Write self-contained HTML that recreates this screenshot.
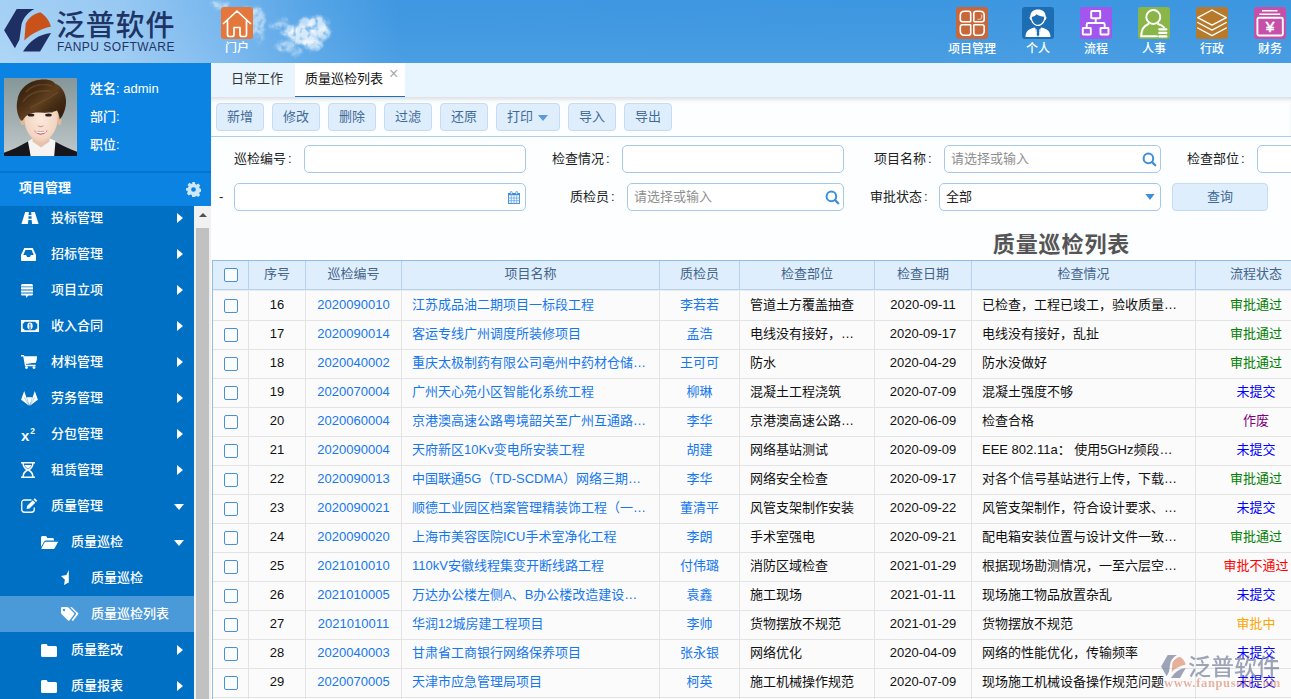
<!DOCTYPE html>
<html lang="zh-CN">
<head>
<meta charset="utf-8">
<title>质量巡检列表</title>
<style>
*{box-sizing:border-box;margin:0;padding:0}
html,body{width:1291px;height:699px;overflow:hidden;background:#fcfeff;font-family:"Liberation Sans","Noto Sans CJK SC",sans-serif;font-size:13px;color:#222}
#hdr{position:absolute;left:0;top:0;width:1291px;height:63px;background:linear-gradient(90deg,#a9d3f6 0,#9ccbf3 120px,#7ab8ee 220px,#5aa7e8 300px,#3f98e1 400px,#3d97e0 100%);overflow:hidden}
#logo-cn{position:absolute;left:56px;top:5.5px;font-size:29px;line-height:40px;font-weight:500;color:#1f3466;letter-spacing:.8px;white-space:nowrap}
#logo-en{position:absolute;left:57px;top:39.5px;font-size:12px;line-height:14px;color:#1f3466;letter-spacing:0.5px;white-space:nowrap}
.nav{position:absolute;top:7px;width:32px;height:32px;border-radius:3px}
.navt{position:absolute;top:42px;width:80px;text-align:center;font-size:12px;line-height:15px;color:#fff;white-space:nowrap;font-weight:500}
#side{position:absolute;left:0;top:63px;width:211px;height:636px;background:#0a83e3}
#side .pt{position:absolute;left:90px;font-size:13px;line-height:16px;color:#fff;white-space:nowrap;font-weight:500}
#sep{position:absolute;left:0;top:108px;width:211px;height:2px;background:#0673cc}
#mtitle{position:absolute;left:19px;top:117px;font-size:13px;line-height:16px;font-weight:bold;color:#fff}
#menu{position:absolute;left:0;top:143px;width:194px;height:493px;background:#0070c5;overflow:hidden}
.mi{position:absolute;left:0;width:194px;height:36px;color:#fff;font-size:13px;line-height:36px;white-space:nowrap;font-weight:500}
.mi.sel{background:#4a99d8}
.mi svg{position:absolute}
.mi span{position:absolute;top:-0.5px}
.arr{position:absolute;left:177px;top:13px;width:0;height:0;border-left:6px solid #fff;border-top:5px solid transparent;border-bottom:5px solid transparent}
.ard{position:absolute;left:174px;top:16px;width:0;height:0;border-top:6px solid #fff;border-left:5px solid transparent;border-right:5px solid transparent}
#sb{position:absolute;left:194px;top:143px;width:17px;height:493px;background:#f1f1f1}
#sb .th{position:absolute;left:2px;top:22px;width:13px;height:480px;background:#c1c1c1}
#sb .up{position:absolute;left:4.5px;top:6.500px;width:0;height:0;border-bottom:4.500px solid #505050;border-left:4px solid transparent;border-right:4px solid transparent}
#tabs{position:absolute;left:211px;top:63px;width:1080px;height:34px;background:#e8f4fe}
#tabs .t1{position:absolute;left:20px;top:0;font-size:13px;line-height:32px;color:#333}
#tabs .t2{position:absolute;left:84px;top:0;width:110px;height:34px;background:#fff;border-bottom:1px solid #1a6fc0;font-size:13px;line-height:32px;color:#111;padding-left:10px}
#tabs .x{position:absolute;left:178px;top:4px;font-size:16px;line-height:14px;color:#aaa}
#tbar{position:absolute;left:211px;top:97px;width:1080px;height:40px;background:#fcfeff;border-bottom:1px solid #a9cdee;box-shadow:inset 0 4px 4px -2px rgba(125,135,150,.3)}
.btn{position:absolute;top:6px;height:28px;width:48px;border:1px solid #c5dcf2;background:#dfeefc;border-radius:4px;font-size:13px;line-height:26px;text-align:center;color:#3f6a96;white-space:nowrap}
.lbl{position:absolute;font-size:13px;line-height:28px;height:28px;color:#222;white-space:nowrap}
.inp{position:absolute;height:28px;border:1px solid #a6c8ea;border-radius:5px;background:#fff;font-size:13px;line-height:26px;color:#8f8f8f;padding-left:6px;white-space:nowrap}
#title{position:absolute;left:961px;top:230px;width:200px;letter-spacing:.9px;padding-left:1px;text-align:center;font-size:22px;line-height:30px;font-weight:bold;color:#555;white-space:nowrap}
#grid{position:absolute;left:212px;top:260px;width:1104px;height:439px;border-left:1px solid #8fbde8;border-top:1px solid #8fbde8;background:#fbfbfb}
#ghead{position:absolute;left:0;top:0;width:1104px;height:29px;background:#deeefc;border-bottom:1px solid #b5d3ef}
.hc{position:absolute;top:0;height:28px;line-height:26px;text-align:center;color:#44648a;font-size:13px;border-right:1px solid #b5d3ef;white-space:nowrap}
.row{position:absolute;left:0;width:1104px;height:29px;border-bottom:1px solid #e3e3e3;background:#fbfbfb}
.c{position:absolute;top:0;height:28px;line-height:25.5px;font-size:13px;white-space:nowrap;overflow:hidden;border-right:1px solid #e3e3e3;color:#111}
.ck{position:absolute;left:12px;width:14px;height:14px;border:1px solid #4a90d6;border-radius:2px;background:#fafcfe}
.lk{color:#1577ee}
</style>
</head>
<body>
<div id="hdr">
<svg style="position:absolute;left:0;top:0" width="1291" height="63" viewBox="0 0 1291 63">
<defs>
<filter id="bl" filterUnits="userSpaceOnUse" x="190" y="-20" width="170" height="110"><feGaussianBlur stdDeviation="1.6" result="b"/><feTurbulence type="fractalNoise" baseFrequency="0.09" numOctaves="3" seed="7" result="n"/><feDisplacementMap in="b" in2="n" scale="9" xChannelSelector="R" yChannelSelector="G" result="d"/><feGaussianBlur in="d" stdDeviation="0.7" result="e"/><feTurbulence type="fractalNoise" baseFrequency="0.16" numOctaves="2" seed="3" result="n2"/><feColorMatrix in="n2" type="matrix" values="0 0 0 0 1  0 0 0 0 1  0 0 0 0 1  2.7 0 0 0 -0.3" result="m"/><feComposite in="e" in2="m" operator="in"/></filter>
<linearGradient id="sky" x1="0" y1="0" x2="0" y2="1"><stop offset="0" stop-color="#2a86dc" stop-opacity=".04"/><stop offset="1" stop-color="#fff" stop-opacity=".06"/></linearGradient>
</defs>
<rect width="1291" height="63" fill="url(#sky)"/>
<g filter="url(#bl)" fill="#fff">
<ellipse cx="257" cy="21" rx="8" ry="13" opacity=".5"/>
<ellipse cx="250" cy="10" rx="7" ry="4" opacity=".4"/>
<ellipse cx="220" cy="5" rx="8" ry="3" opacity=".5"/>
<ellipse cx="259" cy="38" rx="4" ry="5" opacity=".3"/>
<ellipse cx="318" cy="25" rx="11" ry="9" opacity=".7"/>
<ellipse cx="306" cy="22" rx="7" ry="6" opacity=".6"/>
<ellipse cx="303" cy="35" rx="15" ry="10" opacity=".75"/>
<ellipse cx="290" cy="30" rx="9" ry="6" opacity=".6"/>
<ellipse cx="277" cy="25" rx="6" ry="2.500" opacity=".5"/>
<ellipse cx="284" cy="20" rx="3" ry="2" opacity=".4"/>
<ellipse cx="285" cy="46" rx="9" ry="4" opacity=".5"/>
<ellipse cx="313" cy="44" rx="10" ry="6" opacity=".65"/>
<ellipse cx="325" cy="33" rx="5" ry="8" opacity=".6"/>
<ellipse cx="296" cy="52" rx="5" ry="3" opacity=".4"/>
</g>
<path d="M4.1 30.2L16.7 9H34.3C26.1 13.5 21.6 20.7 21.2 27L19.4 39.7L14.9 48.2Z" fill="#1e2f63"/>
<path d="M40.1 12.2C45.500 15.500 49 20 51 26.600C38 30 30 35 24.300 40.600L25.700 23.400C30 16 34 14 40.100 12.200Z" fill="#c9521b"/>
<path d="M51 32.9L40.1 51.4H23C29.8 40.6 38.8 34.3 51 32.9Z" fill="#1e2f63"/>
</svg>
<div id="logo-cn">泛普软件</div>
<div id="logo-en">FANPU SOFTWARE</div>
<div class="nav" style="left:221px;background:#e4783c"><svg width="32" height="32" viewBox="0 0 32 32"><path d="M2.500 16.500L16 4L29.500 16.500M6.500 13.500V27.500Q6.500 29.500 8.500 29.500H11Q13 29.500 13 27.500V20.500H19V27.500Q19 29.500 21 29.500H23.500Q25.500 29.500 25.500 27.500V13.500" fill="none" stroke="#fff" stroke-width="1.700" stroke-linejoin="round" stroke-linecap="round"/></svg></div>
<div class="navt" style="left:197px;top:40.5px">门户</div>
<div class="nav" style="left:956px;background:#c8683a"><svg width="32" height="32" viewBox="0 0 32 32"><g fill="none" stroke="#fff" stroke-width="1.600" stroke-linejoin="round"><path d="M8.50 4.30H12.50Q14.70 4.30 14.70 6.50V14.10Q14.70 14.70 14.10 14.70H6.50Q4.30 14.70 4.30 12.50V8.50Q4.30 4.30 8.50 4.30Z"/><path d="M20.00 4.30H24.00Q28.20 4.30 28.20 8.50V12.50Q28.20 14.70 26.00 14.70H18.40Q17.80 14.70 17.80 14.10V6.50Q17.80 4.30 20.00 4.30Z"/><path d="M6.50 17.80H14.10Q14.70 17.80 14.70 18.40V26.00Q14.70 28.20 12.50 28.20H8.50Q4.30 28.20 4.30 24.00V20.00Q4.30 17.80 6.50 17.80Z"/><path d="M18.40 17.80H26.00Q28.20 17.80 28.20 20.00V24.00Q28.20 28.20 24.00 28.20H20.00Q17.80 28.20 17.80 26.00V18.40Q17.80 17.80 18.40 17.80Z"/></g><path d="M21.500 12.300H23.500Q25.800 12.300 25.800 10V7.500" fill="none" stroke="#fff" stroke-width=".9" opacity=".75"/></svg></div>
<div class="navt" style="left:932px">项目管理</div>
<div class="nav" style="left:1022px;background:#1d6db3"><svg width="32" height="32" viewBox="0 0 32 32"><path d="M16 2.500C11.500 2.500 8.300 5 8.300 9.500C7.600 9.500 7.400 10.500 7.700 11.500C8 12.600 8.600 13 9 13C10 16.500 12.800 19 16 19C19.200 19 22 16.500 23 13C23.400 13 24 12.600 24.300 11.500C24.600 10.500 24.400 9.500 23.700 9.500C23.700 5 20.500 2.500 16 2.500Z" fill="#fff"/><path d="M9.800 10C12 9.800 13.500 8.500 14.500 7.300C16.500 8.800 19.500 9.800 22.200 9.800C22.200 14 19.500 17.800 16 17.800C12.500 17.800 9.800 14 9.800 10Z" fill="#1d6db3"/><path d="M3.500 30C3.500 24 7 21.800 12.800 20.500L16 24L19.200 20.500C25 21.800 28.500 24 28.500 30Z" fill="#fff"/><path d="M15.200 22.500H16.800L17.300 27.500L16 30L14.700 27.500Z" fill="#1d6db3"/><path d="M12.800 20.500L16 24L14 25.500ZM19.200 20.500L16 24L18 25.500Z" fill="#1d6db3" opacity=".35"/></svg></div>
<div class="navt" style="left:998px">个人</div>
<div class="nav" style="left:1080px;background:#a256ee"><svg width="32" height="32" viewBox="0 0 32 32"><g fill="none" stroke="#fff" stroke-width="1.900" stroke-linejoin="round"><rect x="11.200" y="4" width="9" height="7.200" rx=".5"/><path d="M15.700 11.200V16M6.700 21V17.500Q6.700 16 8.200 16H23.200Q24.700 16 24.700 17.500V21"/><rect x="2.800" y="21" width="8" height="6.500" rx=".5"/><rect x="20.500" y="21" width="8" height="6.500" rx=".5"/></g></svg></div>
<div class="navt" style="left:1056px">流程</div>
<div class="nav" style="left:1138px;background:#8ab548"><svg width="32" height="32" viewBox="0 0 32 32"><g fill="none" stroke="#fff" stroke-width="1.900" stroke-linecap="round"><circle cx="15.300" cy="10" r="7"/><path d="M19 29.300H3.200C3.200 22.500 6.500 18.500 10.500 17M20 17C22.500 17.800 24.500 18.800 26 20.300"/></g><g stroke="#fff" stroke-width="2.300" stroke-linecap="round"><path d="M21.300 22.300H28.300M21.300 25.900H28.300M21.300 29.400H28.300"/></g></svg></div>
<div class="navt" style="left:1114px">人事</div>
<div class="nav" style="left:1196px;background:#b77a2c"><svg width="32" height="32" viewBox="0 0 32 32"><g fill="none" stroke="#fff" stroke-width="1.400" stroke-linejoin="round" stroke-linecap="round"><path d="M16 3L30.300 10.600L16 18.200L1.700 10.600Z"/><path d="M1.700 15.500L16 23.100L30.300 15.500"/><path d="M1.700 21L16 28.600L30.300 21"/></g></svg></div>
<div class="navt" style="left:1172px">行政</div>
<div class="nav" style="left:1254px;background:#c64fa9"><svg width="32" height="32" viewBox="0 0 32 32"><g fill="none" stroke="#fff" stroke-width="1.500"><path d="M8 3.700H23.500M5.300 7.200H26.200"/><rect x="3.400" y="10.700" width="25.400" height="17.800" rx="1.500" stroke-width="1.900"/></g><text x="16" y="24.600" font-family="Liberation Sans, sans-serif" font-size="15.500" fill="#fff" stroke="#fff" stroke-width=".5" text-anchor="middle">¥</text></svg></div>
<div class="navt" style="left:1230px">财务</div>
</div>
<div id="side">
<svg style="position:absolute;left:4px;top:15px" width="73" height="78" viewBox="0 0 73 78">
<defs>
<linearGradient id="abg" x1="0" y1="0" x2="0" y2="1"><stop offset="0" stop-color="#85979a"/><stop offset=".55" stop-color="#a3b0b2"/><stop offset="1" stop-color="#c0c9ca"/></linearGradient>
<linearGradient id="ahr" x1="0" y1="0" x2="1" y2=".9"><stop offset="0" stop-color="#2e1c0d"/><stop offset=".35" stop-color="#472d14"/><stop offset=".55" stop-color="#5f3f20"/><stop offset=".75" stop-color="#422a13"/><stop offset="1" stop-color="#2f1d0d"/></linearGradient>
<radialGradient id="afc" cx=".5" cy=".45" r=".6"><stop offset="0" stop-color="#fae9dd"/><stop offset=".7" stop-color="#f3d6c3"/><stop offset="1" stop-color="#e2b79c"/></radialGradient>
<filter id="ab" x="-10%" y="-10%" width="120%" height="120%"><feGaussianBlur stdDeviation=".55"/></filter>
<clipPath id="acl"><rect width="73" height="78"/></clipPath>
</defs>
<g clip-path="url(#acl)">
<rect width="73" height="78" fill="url(#abg)"/>
<g filter="url(#ab)">
<path d="M-2 80V75.500C8 72 16 68 24 63.500L36.500 72L50 63C58 67.500 66 71.500 75 74.500V80Z" fill="#15151b"/>
<path d="M24 63.500L29 60H45L51.500 63L50 80H27Z" fill="#f6f4f2"/>
<path d="M28.500 52H45.500V63.500L37 69.500L28.500 63.500Z" fill="#e6c2aa"/>
<path d="M19.500 34C19.500 50 24 60 36.700 66C49 60 54.600 50 54.600 34C54 26 46 22 36.700 22C27 22 20 26 19.500 34Z" fill="url(#afc)"/>
<ellipse cx="18.500" cy="43" rx="2" ry="4" fill="#e3b89d"/>
<ellipse cx="55.500" cy="43" rx="2" ry="4" fill="#e3b89d"/>
<path d="M17 42.500C12 36 12.300 26 13.500 22C15 10 26 1.500 40 1.500C47 1.500 50 4 51 5.500C58 8 62.500 16 62 25C61.500 32 59 38 55.700 41.500C55.500 38 54.500 35 53 32.500C47 35.500 39 34.500 31 34.500C26 35 22 37 20 40.500C19.500 42 18 43 17 42.500Z" fill="url(#ahr)"/>
<path d="M22 14C28 7 38 5 48 8M19 24C24 16 34 12 46 13M26 30C34 25 44 22 54 14" stroke="#7d5830" stroke-width="1.400" fill="none" opacity=".5"/>
<ellipse cx="27" cy="37" rx="3.300" ry="1.500" fill="#2a1e1c"/><ellipse cx="44.500" cy="37" rx="3.300" ry="1.500" fill="#2a1e1c"/>
<path d="M23 34.500C25.500 33.300 28.500 33.300 31 34.300M40.500 34.300C43 33.300 46 33.300 48.500 34.500" stroke="#5a4028" stroke-width=".9" fill="none" opacity=".7"/>
<path d="M34 47.500C35.200 49 38.200 49 39.400 47.500" stroke="#d49c82" stroke-width="1.100" fill="none"/>
<path d="M30 52.500C32.500 58 41 58 43.500 52.500C39.500 53.800 34 53.800 30 52.500Z" fill="#cf636e"/>
<path d="M31.500 53.600C35 55 38.500 55 42 53.600" stroke="#fff" stroke-width="1.500" fill="none"/>
</g>
</g>
</svg>
<div class="pt" style="top:18px">姓名: admin</div>
<div class="pt" style="top:46px">部门:</div>
<div class="pt" style="top:74px">职位:</div>
<div id="sep"></div>
<div id="mtitle">项目管理</div>
<svg style="position:absolute;left:185.500px;top:118.500px" width="15" height="15" viewBox="0 0 16 16"><path fill="#cfe6fb" fill-rule="evenodd" d="M6.6 0h2.8l.4 2.1c.5.2 1 .4 1.400.7l1.900-1.100 2 2-1.100 1.900c.3.400.5.900.7 1.400l2.100.4v2.800l-2.100.4c-.2.500-.4 1-.7 1.400l1.100 1.900-2 2-1.900-1.100c-.4.300-.9.500-1.400.7L9.400 16H6.600l-.4-2.100c-.5-.2-1-.4-1.400-.7l-1.900 1.100-2-2 1.100-1.900c-.3-.4-.5-.9-.7-1.400L0 9.400V6.600l2.100-.4c.2-.5.400-1 .7-1.400L1.700 2.900l2-2 1.900 1.100c.4-.3.900-.5 1.400-.7zM8 5.500a2.500 2.500 0 100 5 2.500 2.500 0 000-5z"/></svg>
<div id="menu">
<div class="mi" style="top:-6px"><svg width="18" height="12" viewBox="0 0 18 12" style="left:21px;top:12px"><path fill="#fff" d="M4.200 0H7.800L7.600 3H10.400L10.200 0H13.800L17.600 12H11L10.700 8H7.300L7 12H.4ZM7.500 4.300L7.350 6.700H10.650L10.500 4.300Z"/></svg><span style="left:51px">投标管理</span><i class="arr"></i></div>
<div class="mi" style="top:30px"><svg width="15" height="13" viewBox="0 0 16 13" preserveAspectRatio="none" style="left:21px;top:12px"><path fill="#fff" fill-rule="evenodd" d="M3.500 0H12.500L16 7V12C16 12.600 15.600 13 15 13H1C.4 13 0 12.600 0 12V7ZM4.700 2L2.500 7H5.500L6.500 9H9.500L10.500 7H13.500L11.300 2Z"/></svg><span style="left:51px">招标管理</span><i class="arr"></i></div>
<div class="mi" style="top:66px"><svg width="12" height="14" viewBox="0 0 13 14" preserveAspectRatio="none" style="left:21px;top:12px"><path fill="#fff" d="M1.500 0H11.500Q13 0 13 1.500V2.400H0V1.500Q0 0 1.500 0ZM0 3.300H13V5.500H0ZM0 6.400H13V8.600H0ZM0 9.500H13V10Q13 11.500 11.500 11.500H8L5.500 14V11.500H1.500Q0 11.500 0 10Z"/></svg><span style="left:51px">项目立项</span><i class="arr"></i></div>
<div class="mi" style="top:102px"><svg width="18" height="12" viewBox="0 0 18 12" style="left:21px;top:12px"><path fill="#fff" fill-rule="evenodd" d="M0 0H18V12H0ZM3.500 1.700C3.500 2.700 2.700 3.500 1.700 3.500V8.500C2.700 8.500 3.500 9.300 3.500 10.300H14.500C14.500 9.300 15.300 8.500 16.300 8.500V3.500C15.300 3.500 14.500 2.700 14.500 1.700Z"/><ellipse cx="9" cy="6" rx="2.700" ry="3.400" fill="#fff"/><path d="M9 3.800V8.200M8.200 4.600L9 3.800M8.100 8.200H9.900" stroke="#0070c5" stroke-width=".9" fill="none"/></svg><span style="left:51px">收入合同</span><i class="arr"></i></div>
<div class="mi" style="top:138px"><svg width="16" height="14" viewBox="0 0 16 14" style="left:21px;top:11px"><path fill="#fff" d="M0 0H3L3.500 1.600H16L15 7.600L5 8.800L5.200 9.800H14.600V11.200H4L2.300 1.400H0Z"/><path fill="#fff" d="M3.300 1.600H16L15 7.600L4.600 8.800Z"/><circle cx="5.500" cy="12.600" r="1.400" fill="#fff"/><circle cx="13" cy="12.600" r="1.400" fill="#fff"/></svg><span style="left:51px">材料管理</span><i class="arr"></i></div>
<div class="mi" style="top:174px"><svg width="17" height="15" viewBox="0 0 17 15" style="left:21px;top:11px"><path fill="#fff" d="M3.200 0L5.400 6.200H11.600L13.800 0L16.900 8.800L8.500 15L.1 8.800Z"/><path d="M5.400 6.200L8.500 15L11.600 6.200M3 6.200L8.500 15M14 6.200L8.500 15" stroke="#0070c5" stroke-width=".45" fill="none" opacity=".7"/></svg><span style="left:51px">劳务管理</span><i class="arr"></i></div>
<div class="mi" style="top:210px"><svg width="16" height="14" viewBox="0 0 16 14" style="left:21px;top:11px"><text x="0" y="13.500" font-family="Liberation Sans, sans-serif" font-weight="bold" font-size="15" fill="#fff">x</text><text x="9.300" y="6.800" font-family="Liberation Sans, sans-serif" font-weight="bold" font-size="8.500" fill="#fff">2</text></svg><span style="left:51px">分包管理</span><i class="arr"></i></div>
<div class="mi" style="top:246px"><svg width="14" height="16" viewBox="0 0 14 16" style="left:21px;top:10px"><path fill="#fff" fill-rule="evenodd" d="M0 0H14V1.600H12.600C12.600 5 10.500 7 9 8C10.500 9 12.600 11 12.600 14.400H14V16H0V14.400H1.400C1.400 11 3.500 9 5 8C3.500 7 1.400 5 1.400 1.600H0ZM2.900 1.600C2.900 4.500 5 6.300 7 7.300C9 6.300 11.100 4.500 11.100 1.600ZM7 8.700C5 9.700 2.900 11.500 2.900 14.400H11.100C11.100 11.500 9 9.700 7 8.700Z"/><path fill="#fff" d="M3.600 3H10.400C9.800 5 8.300 6 7 6.700C5.700 6 4.200 5 3.600 3Z"/></svg><span style="left:51px">租赁管理</span><i class="arr"></i></div>
<div class="mi" style="top:282px"><svg width="17" height="15" viewBox="0 0 17 15" style="left:21px;top:10px"><path fill="none" stroke="#fff" stroke-width="1.300" d="M10.500 2H3.500Q.75 2 .75 4.500V11.500Q.75 14.250 3.500 14.250H10.500Q13.250 14.250 13.250 11.500V9.500"/><path fill="#fff" d="M13.800 .2L16.300 2.700L15 4L12.500 1.500ZM11.800 2.200L14.300 4.700L8.500 10.500L5.600 11L6 8Z"/></svg><span style="left:51px">质量管理</span><i class="ard"></i></div>
<div class="mi" style="top:318px"><svg width="17" height="13" viewBox="0 0 17 13" style="left:41px;top:12px"><path fill="#fff" d="M0 1.500Q0 0 1.500 0H4.500Q6 0 6 1.500V2H11.500Q13 2 13 3.500V4.500H5Q3.800 4.500 3.200 5.500L0 11Z"/><path fill="#fff" d="M4.600 5.800H16.500Q17.300 5.800 16.800 6.600L13.800 12Q13.300 13 12.200 13H.8Q.1 13 .5 12.300L3.500 6.600Q3.900 5.800 4.600 5.800Z"/></svg><span style="left:71px">质量巡检</span><i class="ard"></i></div>
<div class="mi" style="top:354px"><svg width="8" height="15" viewBox="0 0 8 15" style="left:60.5px;top:10px"><path fill="#fff" d="M7.800 0V12.500L3 15L3.900 9.700L0 5.900L5.400 5.100Z"/></svg><span style="left:91px">质量巡检</span></div>
<div class="mi sel" style="top:390px"><svg width="18" height="14" viewBox="0 0 18 14" style="left:61px;top:11px"><path fill="#fff" fill-rule="evenodd" d="M0 1Q0 0 1 0H6Q7 0 7.700 .7L13 6Q13.700 6.700 13 7.400L8.400 13.500Q7.700 14.200 7 13.500L.7 7.200Q0 6.500 0 5.500ZM3 1.700A1.300 1.300 0 103 4.300A1.300 1.300 0 103 1.700Z"/><path fill="#fff" d="M9 0H9.800Q10.800 0 11.500 .7L17 6Q17.700 6.700 17 7.400L12.400 13.500Q11.700 14.200 11 13.500L10.600 13.100L14.800 7.400Q15.500 6.700 14.800 6Z"/></svg><span style="left:91px">质量巡检列表</span></div>
<div class="mi" style="top:426px"><svg width="16" height="13" viewBox="0 0 16 13" style="left:41px;top:12px"><path fill="#fff" d="M0 1.500Q0 0 1.500 0H5Q6.500 0 6.500 1.500V2H14.500Q16 2 16 3.500V11.500Q16 13 14.500 13H1.500Q0 13 0 11.500Z"/></svg><span style="left:71px">质量整改</span><i class="arr"></i></div>
<div class="mi" style="top:462px"><svg width="16" height="13" viewBox="0 0 16 13" style="left:41px;top:12px"><path fill="#fff" d="M0 1.500Q0 0 1.500 0H5Q6.500 0 6.500 1.500V2H14.500Q16 2 16 3.500V11.500Q16 13 14.500 13H1.500Q0 13 0 11.500Z"/></svg><span style="left:71px">质量报表</span><i class="arr"></i></div>
</div>
<div id="sb"><i class="up"></i><i class="th"></i></div>
</div>
<div id="tabs"><div class="t1">日常工作</div><div class="t2">质量巡检列表</div><div class="x">×</div></div>
<div id="tbar"><div class="btn" style="left:5px;width:48px">新增</div><div class="btn" style="left:61px;width:48px">修改</div><div class="btn" style="left:117px;width:48px">删除</div><div class="btn" style="left:173px;width:48px">过滤</div><div class="btn" style="left:229px;width:48px">还原</div><div class="btn" style="left:285px;width:64px;text-align:left;padding-left:10px">打印<i style="position:absolute;left:41px;top:10.5px;width:0;height:0;border-top:6px solid #5b9bd8;border-left:5px solid transparent;border-right:5px solid transparent"></i></div><div class="btn" style="left:357px;width:48px">导入</div><div class="btn" style="left:413px;width:48px">导出</div></div>
<div id="filter"><div class="lbl" style="left:234px;top:145px">巡检编号<span style="margin-left:2px">:</span></div><div class="inp" style="left:304px;top:145px;width:222px"></div><div class="lbl" style="left:552px;top:145px">检查情况<span style="margin-left:2px">:</span></div><div class="inp" style="left:622px;top:145px;width:222px"></div><div class="lbl" style="left:874px;top:145px">项目名称<span style="margin-left:2px">:</span></div><div class="inp" style="left:944px;top:145px;width:217px">请选择或输入<svg style="position:absolute;right:3.500px;top:6px" width="15" height="15" viewBox="0 0 15 15"><circle cx="6.400" cy="6.400" r="4.800" fill="none" stroke="#3d8fd9" stroke-width="2"/><path d="M10.100 10.100L13.200 13.200" stroke="#3d8fd9" stroke-width="2.300" stroke-linecap="round"/></svg></div><div class="lbl" style="left:1187px;top:145px">检查部位<span style="margin-left:2px">:</span></div><div class="inp" style="left:1257px;top:145px;width:60px"></div><div class="lbl" style="left:219px;top:183px">-</div><div class="inp" style="left:234px;top:183px;width:292px"><svg style="position:absolute;right:5px;top:7px" width="12" height="13" viewBox="0 0 12 13"><rect x=".5" y="2.500" width="11" height="10" fill="#f4faff" stroke="#4a92dc" stroke-width="1"/><rect x="0" y="2" width="12" height="2.200" fill="#3f8cdb"/><path d="M3.300 4.200V12.500M6 4.200V12.500M8.700 4.200V12.500M.5 7H11.500M.5 9.700H11.500" stroke="#6aa6e4" stroke-width=".8" fill="none"/><rect x="2.400" y=".3" width="1.800" height="3" rx=".9" fill="#eaf4fe" stroke="#4a92dc" stroke-width=".7"/><rect x="7.800" y=".3" width="1.800" height="3" rx=".9" fill="#eaf4fe" stroke="#4a92dc" stroke-width=".7"/></svg></div><div class="lbl" style="left:570px;top:183px">质检员<span style="margin-left:2px">:</span></div><div class="inp" style="left:627px;top:183px;width:217px">请选择或输入<svg style="position:absolute;right:3.500px;top:6px" width="15" height="15" viewBox="0 0 15 15"><circle cx="6.400" cy="6.400" r="4.800" fill="none" stroke="#3d8fd9" stroke-width="2"/><path d="M10.100 10.100L13.200 13.200" stroke="#3d8fd9" stroke-width="2.300" stroke-linecap="round"/></svg></div><div class="lbl" style="left:870px;top:183px">审批状态<span style="margin-left:2px">:</span></div><div class="inp" style="left:939px;top:183px;width:222px;color:#222">全部<svg style="position:absolute;right:5px;top:10px" width="10" height="6" viewBox="0 0 10 6"><path d="M.4 0H9.600L5 5.900Z" fill="#3d8fd9"/></svg></div><div class="btn" style="left:1172px;top:183px;width:96px">查询</div></div>
<div id="title">质量巡检列表</div>
<div id="grid"><div id="ghead"><div class="hc" style="left:0px;width:36px"><i class="ck" style="top:7px;left:11px"></i></div><div class="hc" style="left:36px;width:57px">序号</div><div class="hc" style="left:93px;width:96px">巡检编号</div><div class="hc" style="left:189px;width:258px">项目名称</div><div class="hc" style="left:447px;width:80px">质检员</div><div class="hc" style="left:527px;width:135px">检查部位</div><div class="hc" style="left:662px;width:97px">检查日期</div><div class="hc" style="left:759px;width:224px">检查情况</div><div class="hc" style="left:983px;width:121px">流程状态</div></div><div class="row" style="top:29px;height:31px;border-top:1px solid #ececec"><div class="c" style="left:0px;width:36px;height:30px;padding-top:1px"><i class="ck" style="top:8px;left:11px"></i></div><div class="c" style="left:36px;width:57px;text-align:center;height:30px;padding-top:1px">16</div><div class="c lk" style="left:93px;width:96px;text-align:center;height:30px;padding-top:1px">2020090010</div><div class="c lk" style="left:189px;width:258px;padding-left:10px;height:30px;padding-top:1px">江苏成品油二期项目一标段工程</div><div class="c lk" style="left:447px;width:80px;text-align:center;height:30px;padding-top:1px">李若若</div><div class="c" style="left:527px;width:135px;padding-left:10px;height:30px;padding-top:1px">管道土方覆盖抽查</div><div class="c" style="left:662px;width:97px;text-align:center;height:30px;padding-top:1px">2020-09-11</div><div class="c" style="left:759px;width:224px;padding-left:10px;height:30px;padding-top:1px">已检查，工程已竣工，验收质量…</div><div class="c" style="left:983px;width:121px;text-align:center;color:#008000;height:30px;padding-top:1px">审批通过</div></div><div class="row" style="top:60px"><div class="c" style="left:0px;width:36px"><i class="ck" style="top:7px;left:11px"></i></div><div class="c" style="left:36px;width:57px;text-align:center">17</div><div class="c lk" style="left:93px;width:96px;text-align:center">2020090014</div><div class="c lk" style="left:189px;width:258px;padding-left:10px">客运专线广州调度所装修项目</div><div class="c lk" style="left:447px;width:80px;text-align:center">孟浩</div><div class="c" style="left:527px;width:135px;padding-left:10px">电线没有接好，…</div><div class="c" style="left:662px;width:97px;text-align:center">2020-09-17</div><div class="c" style="left:759px;width:224px;padding-left:10px">电线没有接好，乱扯</div><div class="c" style="left:983px;width:121px;text-align:center;color:#008000">审批通过</div></div><div class="row" style="top:89px"><div class="c" style="left:0px;width:36px"><i class="ck" style="top:7px;left:11px"></i></div><div class="c" style="left:36px;width:57px;text-align:center">18</div><div class="c lk" style="left:93px;width:96px;text-align:center">2020040002</div><div class="c lk" style="left:189px;width:258px;padding-left:10px">重庆太极制药有限公司亳州中药材仓储…</div><div class="c lk" style="left:447px;width:80px;text-align:center">王可可</div><div class="c" style="left:527px;width:135px;padding-left:10px">防水</div><div class="c" style="left:662px;width:97px;text-align:center">2020-04-29</div><div class="c" style="left:759px;width:224px;padding-left:10px">防水没做好</div><div class="c" style="left:983px;width:121px;text-align:center;color:#008000">审批通过</div></div><div class="row" style="top:118px"><div class="c" style="left:0px;width:36px"><i class="ck" style="top:7px;left:11px"></i></div><div class="c" style="left:36px;width:57px;text-align:center">19</div><div class="c lk" style="left:93px;width:96px;text-align:center">2020070004</div><div class="c lk" style="left:189px;width:258px;padding-left:10px">广州天心苑小区智能化系统工程</div><div class="c lk" style="left:447px;width:80px;text-align:center">柳琳</div><div class="c" style="left:527px;width:135px;padding-left:10px">混凝土工程浇筑</div><div class="c" style="left:662px;width:97px;text-align:center">2020-07-09</div><div class="c" style="left:759px;width:224px;padding-left:10px">混凝土强度不够</div><div class="c" style="left:983px;width:121px;text-align:center;color:#0000ff">未提交</div></div><div class="row" style="top:147px"><div class="c" style="left:0px;width:36px"><i class="ck" style="top:7px;left:11px"></i></div><div class="c" style="left:36px;width:57px;text-align:center">20</div><div class="c lk" style="left:93px;width:96px;text-align:center">2020060004</div><div class="c lk" style="left:189px;width:258px;padding-left:10px">京港澳高速公路粤境韶关至广州互通路…</div><div class="c lk" style="left:447px;width:80px;text-align:center">李华</div><div class="c" style="left:527px;width:135px;padding-left:10px">京港澳高速公路…</div><div class="c" style="left:662px;width:97px;text-align:center">2020-06-09</div><div class="c" style="left:759px;width:224px;padding-left:10px">检查合格</div><div class="c" style="left:983px;width:121px;text-align:center;color:#800080">作废</div></div><div class="row" style="top:176px"><div class="c" style="left:0px;width:36px"><i class="ck" style="top:7px;left:11px"></i></div><div class="c" style="left:36px;width:57px;text-align:center">21</div><div class="c lk" style="left:93px;width:96px;text-align:center">2020090004</div><div class="c lk" style="left:189px;width:258px;padding-left:10px">天府新区10Kv变电所安装工程</div><div class="c lk" style="left:447px;width:80px;text-align:center">胡建</div><div class="c" style="left:527px;width:135px;padding-left:10px">网络基站测试</div><div class="c" style="left:662px;width:97px;text-align:center">2020-09-09</div><div class="c" style="left:759px;width:224px;padding-left:10px">EEE 802.11a： 使用5GHz频段…</div><div class="c" style="left:983px;width:121px;text-align:center;color:#0000ff">未提交</div></div><div class="row" style="top:205px"><div class="c" style="left:0px;width:36px"><i class="ck" style="top:7px;left:11px"></i></div><div class="c" style="left:36px;width:57px;text-align:center">22</div><div class="c lk" style="left:93px;width:96px;text-align:center">2020090013</div><div class="c lk" style="left:189px;width:258px;padding-left:10px">中国联通5G（TD-SCDMA）网络三期…</div><div class="c lk" style="left:447px;width:80px;text-align:center">李华</div><div class="c" style="left:527px;width:135px;padding-left:10px">网络安全检查</div><div class="c" style="left:662px;width:97px;text-align:center">2020-09-17</div><div class="c" style="left:759px;width:224px;padding-left:10px">对各个信号基站进行上传，下载…</div><div class="c" style="left:983px;width:121px;text-align:center;color:#008000">审批通过</div></div><div class="row" style="top:234px"><div class="c" style="left:0px;width:36px"><i class="ck" style="top:7px;left:11px"></i></div><div class="c" style="left:36px;width:57px;text-align:center">23</div><div class="c lk" style="left:93px;width:96px;text-align:center">2020090021</div><div class="c lk" style="left:189px;width:258px;padding-left:10px">顺德工业园区档案管理精装饰工程（一…</div><div class="c lk" style="left:447px;width:80px;text-align:center">董清平</div><div class="c" style="left:527px;width:135px;padding-left:10px">风管支架制作安装</div><div class="c" style="left:662px;width:97px;text-align:center">2020-09-22</div><div class="c" style="left:759px;width:224px;padding-left:10px">风管支架制作，符合设计要求、…</div><div class="c" style="left:983px;width:121px;text-align:center;color:#0000ff">未提交</div></div><div class="row" style="top:263px"><div class="c" style="left:0px;width:36px"><i class="ck" style="top:7px;left:11px"></i></div><div class="c" style="left:36px;width:57px;text-align:center">24</div><div class="c lk" style="left:93px;width:96px;text-align:center">2020090020</div><div class="c lk" style="left:189px;width:258px;padding-left:10px">上海市美容医院ICU手术室净化工程</div><div class="c lk" style="left:447px;width:80px;text-align:center">李朗</div><div class="c" style="left:527px;width:135px;padding-left:10px">手术室强电</div><div class="c" style="left:662px;width:97px;text-align:center">2020-09-21</div><div class="c" style="left:759px;width:224px;padding-left:10px">配电箱安装位置与设计文件一致…</div><div class="c" style="left:983px;width:121px;text-align:center;color:#008000">审批通过</div></div><div class="row" style="top:292px"><div class="c" style="left:0px;width:36px"><i class="ck" style="top:7px;left:11px"></i></div><div class="c" style="left:36px;width:57px;text-align:center">25</div><div class="c lk" style="left:93px;width:96px;text-align:center">2021010010</div><div class="c lk" style="left:189px;width:258px;padding-left:10px">110kV安徽线程集变开断线路工程</div><div class="c lk" style="left:447px;width:80px;text-align:center">付伟璐</div><div class="c" style="left:527px;width:135px;padding-left:10px">消防区域检查</div><div class="c" style="left:662px;width:97px;text-align:center">2021-01-29</div><div class="c" style="left:759px;width:224px;padding-left:10px">根据现场勘测情况，一至六层空…</div><div class="c" style="left:983px;width:121px;text-align:center;color:#ff0000">审批不通过</div></div><div class="row" style="top:321px"><div class="c" style="left:0px;width:36px"><i class="ck" style="top:7px;left:11px"></i></div><div class="c" style="left:36px;width:57px;text-align:center">26</div><div class="c lk" style="left:93px;width:96px;text-align:center">2021010005</div><div class="c lk" style="left:189px;width:258px;padding-left:10px">万达办公楼左侧A、B办公楼改造建设…</div><div class="c lk" style="left:447px;width:80px;text-align:center">袁鑫</div><div class="c" style="left:527px;width:135px;padding-left:10px">施工现场</div><div class="c" style="left:662px;width:97px;text-align:center">2021-01-11</div><div class="c" style="left:759px;width:224px;padding-left:10px">现场施工物品放置杂乱</div><div class="c" style="left:983px;width:121px;text-align:center;color:#0000ff">未提交</div></div><div class="row" style="top:350px"><div class="c" style="left:0px;width:36px"><i class="ck" style="top:7px;left:11px"></i></div><div class="c" style="left:36px;width:57px;text-align:center">27</div><div class="c lk" style="left:93px;width:96px;text-align:center">2021010011</div><div class="c lk" style="left:189px;width:258px;padding-left:10px">华润12城房建工程项目</div><div class="c lk" style="left:447px;width:80px;text-align:center">李帅</div><div class="c" style="left:527px;width:135px;padding-left:10px">货物摆放不规范</div><div class="c" style="left:662px;width:97px;text-align:center">2021-01-29</div><div class="c" style="left:759px;width:224px;padding-left:10px">货物摆放不规范</div><div class="c" style="left:983px;width:121px;text-align:center;color:#ffa500">审批中</div></div><div class="row" style="top:379px"><div class="c" style="left:0px;width:36px"><i class="ck" style="top:7px;left:11px"></i></div><div class="c" style="left:36px;width:57px;text-align:center">28</div><div class="c lk" style="left:93px;width:96px;text-align:center">2020040003</div><div class="c lk" style="left:189px;width:258px;padding-left:10px">甘肃省工商银行网络保养项目</div><div class="c lk" style="left:447px;width:80px;text-align:center">张永银</div><div class="c" style="left:527px;width:135px;padding-left:10px">网络优化</div><div class="c" style="left:662px;width:97px;text-align:center">2020-04-09</div><div class="c" style="left:759px;width:224px;padding-left:10px">网络的性能优化，传输频率</div><div class="c" style="left:983px;width:121px;text-align:center;color:#0000ff">未提交</div></div><div class="row" style="top:408px"><div class="c" style="left:0px;width:36px"><i class="ck" style="top:7px;left:11px"></i></div><div class="c" style="left:36px;width:57px;text-align:center">29</div><div class="c lk" style="left:93px;width:96px;text-align:center">2020070005</div><div class="c lk" style="left:189px;width:258px;padding-left:10px">天津市应急管理局项目</div><div class="c lk" style="left:447px;width:80px;text-align:center">柯英</div><div class="c" style="left:527px;width:135px;padding-left:10px">施工机械操作规范</div><div class="c" style="left:662px;width:97px;text-align:center">2020-07-09</div><div class="c" style="left:759px;width:224px;padding-left:10px">现场施工机械设备操作规范问题</div><div class="c" style="left:983px;width:121px;text-align:center;color:#0000ff">未提交</div></div><div class="row" style="top:437px"><div class="c" style="left:0px;width:36px"><i class="ck" style="top:7px;left:11px"></i></div><div class="c" style="left:36px;width:57px;text-align:center"></div><div class="c lk" style="left:93px;width:96px;text-align:center"></div><div class="c lk" style="left:189px;width:258px;padding-left:10px"></div><div class="c lk" style="left:447px;width:80px;text-align:center"></div><div class="c" style="left:527px;width:135px;padding-left:10px"></div><div class="c" style="left:662px;width:97px;text-align:center"></div><div class="c" style="left:759px;width:224px;padding-left:10px"></div><div class="c" style="left:983px;width:121px;text-align:center;color:#222"></div></div></div>
<div id="wm" style="position:absolute;left:1155px;top:648px;width:136px;height:51px;opacity:.6">
<svg style="position:absolute;left:6px;top:7px" width="25" height="23" viewBox="4 9 47.5 42.5" preserveAspectRatio="none"><path d="M4.1 30.200L16.700 9H34.300C26.100 13.500 21.600 20.700 21.200 27L19.400 39.700L14.900 48.200Z" fill="#5f6c8c"/><path d="M40.100 12.200C45.500 15.500 49 20 51 26.600C38 30 30 35 24.300 40.600L25.700 23.400C30 16 34 14 40.100 12.200Z" fill="#d8805c"/><path d="M51 32.900L40.100 51.400H23C29.800 40.600 38.800 34.300 51 32.900Z" fill="#5f6c8c"/></svg>
<div style="position:absolute;left:33px;top:3px;font-size:23px;line-height:32px;font-weight:500;color:#5f6c8c;white-space:nowrap">泛普软件</div>
<div style="position:absolute;left:9px;top:28px;font-family:'Liberation Serif',serif;font-weight:bold;font-size:12.500px;line-height:14px;color:#d98468;letter-spacing:.66px;white-space:nowrap">www.fanpusoft.com</div>
</div>
</body></html>
